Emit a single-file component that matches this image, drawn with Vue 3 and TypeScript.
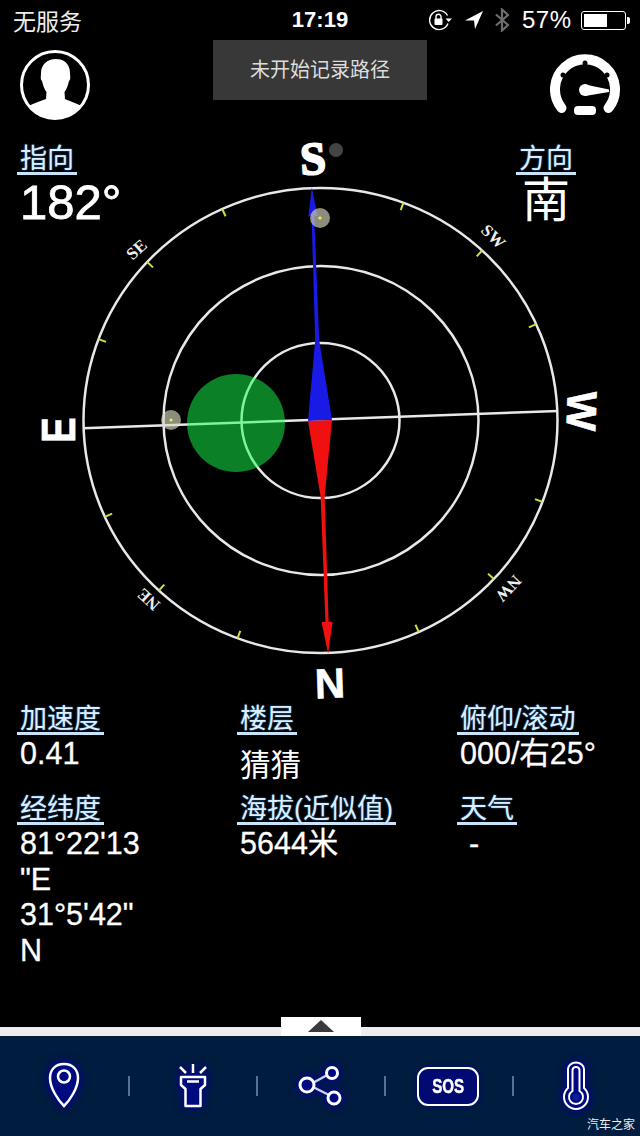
<script setup lang="ts">
interface Reading { label: string; lines: string[]; cjk?: boolean; indent?: boolean }

const readings: Reading[] = [
  { label: '加速度', lines: ['0.41'] },
  { label: '楼层', lines: ['猜猜'], cjk: true },
  { label: '俯仰/滚动', lines: ['000/右25°'] },
  { label: '经纬度', lines: ['81°22\'13', '"E', '31°5\'42"', 'N'] },
  { label: '海拔(近似值)', lines: ['5644米'] },
  { label: '天气', lines: ['-'], indent: true },
]

const cx = 320.5
const cy = 420.5
const rx = 237
const ry = 232.5
const tickSteps = [1, 2, 3, 5, 6, 7, 9, 10, 11, 13, 14, 15]
const ticks = tickSteps.map((k) => {
  const a = ((k * 22.5 - 2) * Math.PI) / 180
  return {
    k,
    x1: cx + rx * Math.sin(a),
    y1: cy - ry * Math.cos(a),
    x2: cx + (rx - 8) * Math.sin(a),
    y2: cy - (ry - 8) * Math.cos(a),
  }
})

const minor = [
  { text: 'SE', x: 137, y: 250, r: -42 },
  { text: 'SW', x: 493, y: 237, r: 45 },
  { text: 'NE', x: 149, y: 599, r: 222 },
  { text: 'NW', x: 508, y: 588, r: 133 },
]
</script>

<template>
  <div class="page">
    <svg class="compass" width="640" height="1136" viewBox="0 0 640 1136">
      <g fill="none" stroke="#e8e8e8" stroke-width="2.5">
        <ellipse :cx="cx" :cy="cy" :rx="rx" :ry="ry" />
        <ellipse :cx="cx + 0.5" :cy="cy" rx="157.5" ry="154.5" />
        <ellipse :cx="cx" :cy="cy" rx="79" ry="77.5" />
        <line x1="83" y1="428.2" x2="558" y2="411" />
      </g>
      <line
        v-for="t in ticks"
        :key="t.k"
        :x1="t.x1"
        :y1="t.y1"
        :x2="t.x2"
        :y2="t.y2"
        stroke="#d6dc3c"
        stroke-width="2"
      />
      <circle cx="236" cy="423" r="49" fill="#16ff4c" opacity="0.5" />
      <g transform="rotate(-2 320 420.5)">
        <path d="M320 187 L324.5 216 L321.3 216 L322 340 L332 420.5 L308 420.5 L318 340 L318.7 216 L315.5 216 Z" fill="#1a1ae6" />
        <path d="M308 420.5 L332 420.5 L322 497 L321.6 622 L325.500 622 L320 654 L314.500 622 L318.4 622 L318 497 Z" fill="#f01010" />
      </g>
      <circle cx="320" cy="218" r="10" fill="#d8d8c0" opacity="0.65" />
      <circle cx="320" cy="218" r="1.6" fill="#f2f23c" />
      <circle cx="171" cy="420" r="10" fill="#d8d8c0" opacity="0.65" />
      <circle cx="171" cy="420" r="1.6" fill="#f2f23c" />
      <circle cx="336" cy="150" r="7" fill="#444444" />
      <text x="313" y="174" class="pole serif" transform="rotate(-3 313 158)">S</text>
      <text x="330" y="698" class="pole" transform="rotate(-2 330 683)">N</text>
      <text class="pole pole-wide" transform="translate(57.500 430) rotate(-90) scale(0.8 1)" y="17">E</text>
      <text x="582" y="426" class="pole" transform="rotate(92 582 411)">W</text>
      <text
        v-for="m in minor"
        :key="m.text"
        :x="m.x"
        :y="m.y + 5"
        class="minor"
        :transform="`rotate(${m.r} ${m.x} ${m.y})`"
      >{{ m.text }}</text>
    </svg>

    <header class="status">
      <span class="carrier">无服务</span>
      <span class="clock">17:19</span>
      <div class="status-right">
        <svg width="26" height="22" viewBox="0 0 26 22">
          <path d="M20 14.5 A9.5 9.5 0 1 1 19.5 6.5" fill="none" stroke="#fff" stroke-width="1.4" />
          <path d="M17.5 9.5 L24 9.5 L20.7 13 Z" fill="#fff" />
          <rect x="6.5" y="9.5" width="8" height="6.5" rx="1" fill="#fff" />
          <path d="M8 10 V7.8 a2.5 2.5 0 0 1 5 0 V10" fill="none" stroke="#fff" stroke-width="1.4" />
        </svg>
        <svg class="s-arrow" width="20" height="20" viewBox="0 0 20 20">
          <path d="M19 1 L1 10.5 L10 10.5 L11 19 Z" fill="#fff" />
        </svg>
        <svg class="s-bt" width="16" height="24" viewBox="0 0 16 24">
          <path d="M2 6.5 L14 17 L8 22.5 V1.5 L14 7 L2 17.5" fill="none" stroke="#6e6e6e" stroke-width="2.2" />
        </svg>
        <span class="percent">57%</span>
        <div class="battery"><div class="battery-fill"></div></div>
        <div class="battery-tip"></div>
      </div>
    </header>

    <div class="toast">未开始记录路径</div>

    <div class="tools">
      <svg width="72" height="72" viewBox="0 0 72 72">
        <defs>
          <clipPath id="avatar-clip"><circle cx="36" cy="36" r="33" /></clipPath>
        </defs>
        <circle cx="36" cy="36" r="33.5" fill="none" stroke="#fff" stroke-width="3" />
        <path
          clip-path="url(#avatar-clip)"
          d="M37 10 C46 10 51 16 51 24 C51 27 52 30 50 32 C49 37 47 41 45.5 43 L46 50 C50 52 57 54 64 58 L64 72 L8 72 L8 58 C15 54 22 52 27 50 L27.500 43 C26 41 24 37 23 32 C21 30 22 27 22 24 C22 16 28 10 37 10 Z"
          fill="#fff"
        />
      </svg>
      <svg class="gauge" width="72" height="66" viewBox="0 0 72 66">
        <path d="M11.500 55 A30 30 0 1 1 58.500 55" fill="none" stroke="#fff" stroke-width="10" stroke-linecap="round" />
        <circle cx="35" cy="10" r="2.500" fill="#000" />
        <circle cx="13" cy="22" r="2.500" fill="#000" />
        <circle cx="57" cy="22" r="2.500" fill="#000" />
        <circle cx="35" cy="37" r="6" fill="#fff" />
        <path d="M35 31.500 L59 36.500 L59 39 L35 43 Z" fill="#fff" />
        <rect x="24" y="53" width="22" height="9" rx="4" fill="#fff" />
      </svg>
    </div>

    <div class="readouts">
      <div class="readout">
        <span class="label">指向</span>
        <span class="big">182°</span>
      </div>
      <div class="readout readout-right">
        <span class="label">方向</span>
        <span class="big big-cjk">南</span>
      </div>
    </div>

    <section class="grid">
      <div v-for="r in readings" :key="r.label" class="cell">
        <span class="label">{{ r.label }}</span>
        <div class="values" :class="{ 'values-cjk': r.cjk, 'values-indent': r.indent }">
          <div v-for="l in r.lines" :key="l">{{ l }}</div>
        </div>
      </div>
    </section>

    <div class="strip">
      <div class="handle"><div class="triangle"></div></div>
    </div>
    <nav class="dock">
      <div class="slot">
        <svg class="ico" width="40" height="50" viewBox="0 0 40 50">
          <path d="M20 3 C29 3 34 9 34 17 C34 27 26 39 20 45 C14 39 6 27 6 17 C6 9 11 3 20 3 Z" fill="#000a80" stroke="#fff" stroke-width="2.500" />
          <circle cx="20" cy="15.500" r="6" fill="none" stroke="#fff" stroke-width="2.500" />
        </svg>
      </div>
      <i class="sep"></i>
      <div class="slot">
        <svg class="ico" width="40" height="50" viewBox="0 0 40 50">
          <path d="M8 16 H32 V24 L27.500 28 V45 H12.500 V28 L8 24 Z" fill="#000a80" stroke="#fff" stroke-width="2.500" stroke-linejoin="round" />
          <path d="M14 20.500 H26" stroke="#fff" stroke-width="2.500" />
          <path d="M20 3 V12 M7 6 L13 12 M33 6 L27 12" stroke="#fff" stroke-width="2.500" />
        </svg>
      </div>
      <i class="sep"></i>
      <div class="slot">
        <svg class="ico" width="48" height="50" viewBox="0 0 48 50">
          <path d="M12 24 L34 12 M12 24 L36 36" stroke="#c8d4f0" stroke-width="2.500" />
          <circle cx="10" cy="24" r="7" fill="#000a80" stroke="#fff" stroke-width="3" />
          <circle cx="35" cy="12" r="5.500" fill="#000a80" stroke="#fff" stroke-width="3" />
          <circle cx="37" cy="37" r="6" fill="#000a80" stroke="#fff" stroke-width="3" />
        </svg>
      </div>
      <i class="sep"></i>
      <div class="slot">
        <div class="sos"><span class="sos-text">SOS</span></div>
      </div>
      <i class="sep"></i>
      <div class="slot">
        <svg class="ico thermo" width="40" height="50" viewBox="0 0 40 50">
          <path d="M12 8 A8 6.500 0 0 1 28 8 V27 A12 12 0 1 1 12 27 Z" fill="#000a80" stroke="#fff" stroke-width="2" />
          <path d="M16.500 9 A3.500 3 0 0 1 23.500 9 V30 A7 7 0 1 1 16.500 30 Z" fill="none" stroke="#fff" stroke-width="2" />
          <circle cx="20" cy="36" r="3.500" fill="#0a1ea0" />
        </svg>
      </div>
      <span class="mark">汽车之家</span>
    </nav>
  </div>
</template>

<style scoped>
.page {
  position: relative;
  width: 640px;
  height: 1136px;
  display: flex;
  flex-direction: column;
  background: #000;
  color: #fff;
  overflow: hidden;
  font-family: "Liberation Sans", "Noto Sans CJK SC", sans-serif;
}
.compass {
  position: absolute;
  top: 0;
  left: 0;
}
.pole {
  font-family: "Liberation Sans", sans-serif;
  font-size: 42px;
  font-weight: 700;
  fill: #fff;
  stroke: #fff;
  stroke-width: 0.6;
  text-anchor: middle;
}
.pole-wide {
  font-size: 48px;
}
.serif {
  font-family: "Liberation Serif", serif;
  font-size: 46px;
  stroke-width: 2;
}
.minor {
  font-family: "Liberation Serif", serif;
  font-size: 17px;
  font-weight: 700;
  fill: #eee;
  text-anchor: middle;
}
.status {
  position: relative;
  height: 40px;
  display: flex;
  align-items: center;
  padding: 0 10px 0 13px;
  flex: none;
}
.carrier {
  font-size: 23px;
  color: #eee;
}
.clock {
  position: absolute;
  left: 0;
  right: 0;
  text-align: center;
  font-size: 22px;
  font-weight: 700;
}
.status-right {
  margin-left: auto;
  display: flex;
  align-items: center;
}
.s-arrow {
  margin-left: 10px;
}
.s-bt {
  margin-left: 10px;
}
.percent {
  margin-left: 12px;
  font-size: 24px;
  letter-spacing: 0.5px;
  width: 59px;
}
.battery {
  width: 45px;
  height: 19px;
  border: 1px solid #fff;
  border-radius: 3px;
  padding: 2px;
  box-sizing: border-box;
}
.battery-fill {
  width: 23px;
  height: 100%;
  background: #fff;
}
.battery-tip {
  width: 3px;
  height: 7px;
  margin-left: 1px;
  background: #fff;
  border-radius: 0 2px 2px 0;
}
.toast {
  position: absolute;
  top: 40px;
  left: 213px;
  width: 214px;
  height: 60px;
  padding-bottom: 4px;
  box-sizing: border-box;
  background: #383838;
  color: #ddd;
  font-size: 20px;
  display: flex;
  align-items: center;
  justify-content: center;
}
.tools {
  position: relative;
  display: flex;
  justify-content: space-between;
  align-items: flex-start;
  height: 98px;
  padding: 9px 18px 0 19px;
  box-sizing: border-box;
  flex: none;
}
.gauge {
  margin-top: 4px;
}
.readouts {
  position: relative;
  display: flex;
  justify-content: space-between;
  padding: 0 64px 0 17px;
  flex: none;
  height: 560px;
}
.readout {
  display: flex;
  flex-direction: column;
  align-items: flex-start;
}
.readout-right {
  align-items: center;
}
.label {
  display: inline-block;
  padding: 0 3px;
  font-size: 27px;
  line-height: 42px;
  height: 34px;
  color: #dcefff;
  border-bottom: 3px solid #c8e4fa;
  text-shadow: 0 0 2px #3a7fd0;
}
.big {
  font-size: 49px;
  line-height: 54px;
  margin-left: 3px;
  -webkit-text-stroke: 0.8px #fff;
}
.big-cjk {
  margin-left: 0;
  font-size: 48px;
  line-height: 52px;
  -webkit-text-stroke: 0;
}
.grid {
  position: relative;
  display: grid;
  grid-template-columns: 220px 220px 1fr;
  grid-template-rows: 90px auto;
  padding-left: 17px;
  flex: none;
}
.cell {
  display: flex;
  flex-direction: column;
  align-items: flex-start;
}
.values {
  font-size: 30.5px;
  line-height: 35.500px;
  padding-left: 3px;
  padding-top: 1px;
  -webkit-text-stroke: 0.3px #fff;
}
.values-cjk {
  margin-top: 12px;
  -webkit-text-stroke: 0;
}
.values-indent {
  padding-left: 12px;
}
.strip {
  position: absolute;
  left: 0;
  right: 0;
  bottom: 100px;
  height: 9px;
  background: #eeeeee;
}
.handle {
  position: absolute;
  left: 281px;
  bottom: 0;
  width: 80px;
  height: 19px;
  background: #fff;
  display: flex;
  justify-content: center;
  padding-top: 3px;
  box-sizing: border-box;
}
.triangle {
  width: 0;
  height: 0;
  border-left: 13px solid transparent;
  border-right: 13px solid transparent;
  border-bottom: 12px solid #3a3a3a;
}
.dock {
  position: absolute;
  left: 0;
  right: 0;
  bottom: 0;
  height: 100px;
  background: #001c3e;
  display: grid;
  grid-template-columns: 128px 2px 126px 2px 126px 2px 126px 2px 126px;
  align-items: center;
}
.slot {
  display: flex;
  justify-content: center;
  align-items: center;
}
.ico {
  filter: drop-shadow(0 0 4px #000a80) drop-shadow(0 0 2px #000a80);
}
.thermo {
  margin-left: -3px;
}
.sep {
  display: block;
  width: 2px;
  height: 20px;
  background: #52749a;
}
.sos {
  width: 62px;
  height: 39px;
  box-sizing: border-box;
  border: 2px solid #fff;
  border-radius: 11px;
  background: #000a70;
  box-shadow: 0 0 5px #000a80;
  display: flex;
  align-items: center;
  justify-content: center;
  margin-left: -2px;
}
.sos-text {
  display: inline-block;
  font-family: "Liberation Sans", sans-serif;
  font-weight: 700;
  font-size: 21px;
  -webkit-text-stroke: 0.5px #fff;
  transform: scaleX(0.72);
}
.mark {
  position: absolute;
  right: 5px;
  bottom: 3px;
  font-size: 12px;
  line-height: 15px;
  color: #eee;
}
</style>
